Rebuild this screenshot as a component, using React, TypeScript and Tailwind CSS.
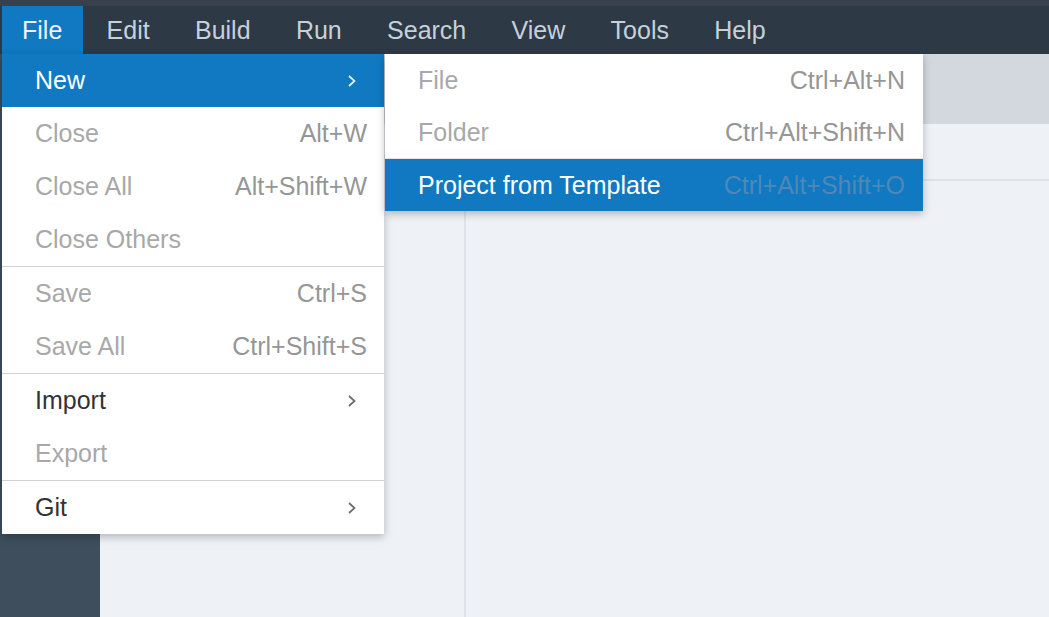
import React from 'react';

type Item = {
  label: string;
  shortcut?: string;
  disabled?: boolean;
  active?: boolean;
  submenu?: boolean;
};

const fileMenu: (Item | 'sep')[] = [
  { label: 'New', submenu: true, active: true },
  { label: 'Close', shortcut: 'Alt+W', disabled: true },
  { label: 'Close All', shortcut: 'Alt+Shift+W', disabled: true },
  { label: 'Close Others', disabled: true },
  'sep',
  { label: 'Save', shortcut: 'Ctrl+S', disabled: true },
  { label: 'Save All', shortcut: 'Ctrl+Shift+S', disabled: true },
  'sep',
  { label: 'Import', submenu: true },
  { label: 'Export', disabled: true },
  'sep',
  { label: 'Git', submenu: true },
];

const newMenu: Item[] = [
  { label: 'File', shortcut: 'Ctrl+Alt+N', disabled: true },
  { label: 'Folder', shortcut: 'Ctrl+Alt+Shift+N', disabled: true },
  { label: 'Project from Template', shortcut: 'Ctrl+Alt+Shift+O', active: true },
];

const topMenus = ['Edit', 'Build', 'Run', 'Search', 'View', 'Tools', 'Help'];

function Chevron({ light }: { light?: boolean }) {
  return (
    <svg width="12" height="14" viewBox="0 0 12 14" className="mr-[9px] shrink-0">
      <polyline
        points="3,2 8.5,7 3,12"
        fill="none"
        stroke={light ? '#e6f0f8' : '#6b6b6b'}
        strokeWidth="1.7"
      />
    </svg>
  );
}

function MenuRow({ item }: { item: Item }) {
  let text = 'text-[#333333]';
  if (item.disabled) text = 'text-[#a8a8a8]';
  if (item.active) text = 'text-white';
  return (
    <div
      className={`flex items-center justify-between h-[53px] pl-[33px] pr-[17px] ${
        item.active ? 'bg-[#1079c1]' : ''
      } ${text}`}
    >
      <span>{item.label}</span>
      {item.submenu ? (
        <Chevron light={item.active} />
      ) : (
        <span className={item.active ? 'text-[#4f87b6]' : item.disabled ? 'text-[#969696]' : ''}>
          {item.shortcut}
        </span>
      )}
    </div>
  );
}

export default function App() {
  return (
    <div className="relative w-[1049px] h-[617px] overflow-hidden bg-[#eef2f7] font-['Liberation_Sans',Arial,sans-serif] text-[25px] leading-none">
      {/* menu bar */}
      <div className="h-[54px] bg-[#2d3945] border-t-[6px] border-[#36414c] flex items-stretch pl-[2px] gap-[1.3px]">
        <div className="bg-[#1079c1] text-[#eaf3fb] pl-[20px] pr-[21px] flex items-center">File</div>
        {topMenus.map((m) => (
          <div key={m} className="px-[22px] flex items-center text-[#c6d1dc]">
            {m}
          </div>
        ))}
      </div>

      {/* workspace */}
      <div className="flex h-[563px]">
        <div className="w-[100px] bg-[#3e4e5d]" />
        <div className="flex-1 flex flex-col">
          <div className="h-[70px] bg-[#d3d8de]" />
          <div className="flex-1 flex">
            <div className="w-[366px] border-r-2 border-[#dfe3e9]" />
            <div className="flex-1 flex flex-col">
              <div className="h-[57px] border-b-2 border-[#dfe3e9]" />
              <div className="flex-1" />
            </div>
          </div>
        </div>
      </div>

      {/* File menu */}
      <div className="absolute left-[2px] top-[54px] w-[382px] bg-white shadow-[0_3px_8px_rgba(0,0,0,0.25)]">
        {fileMenu.map((it, i) =>
          it === 'sep' ? (
            <div key={i} className="h-px bg-[#d2d2d2]" />
          ) : (
            <MenuRow key={i} item={it} />
          )
        )}
      </div>

      {/* New submenu */}
      <div className="absolute left-[385px] top-[54px] w-[538px] bg-white shadow-[0_3px_8px_rgba(0,0,0,0.25)]">
        {newMenu.map((it, i) => (
          <div key={i} className={i === 2 ? 'border-t border-[#e2e2e2]' : ''}>
            <div className="[&>div]:h-[52px] [&>div]:pr-[18px]">
              <MenuRow item={it} />
            </div>
          </div>
        ))}
      </div>
    </div>
  );
}
